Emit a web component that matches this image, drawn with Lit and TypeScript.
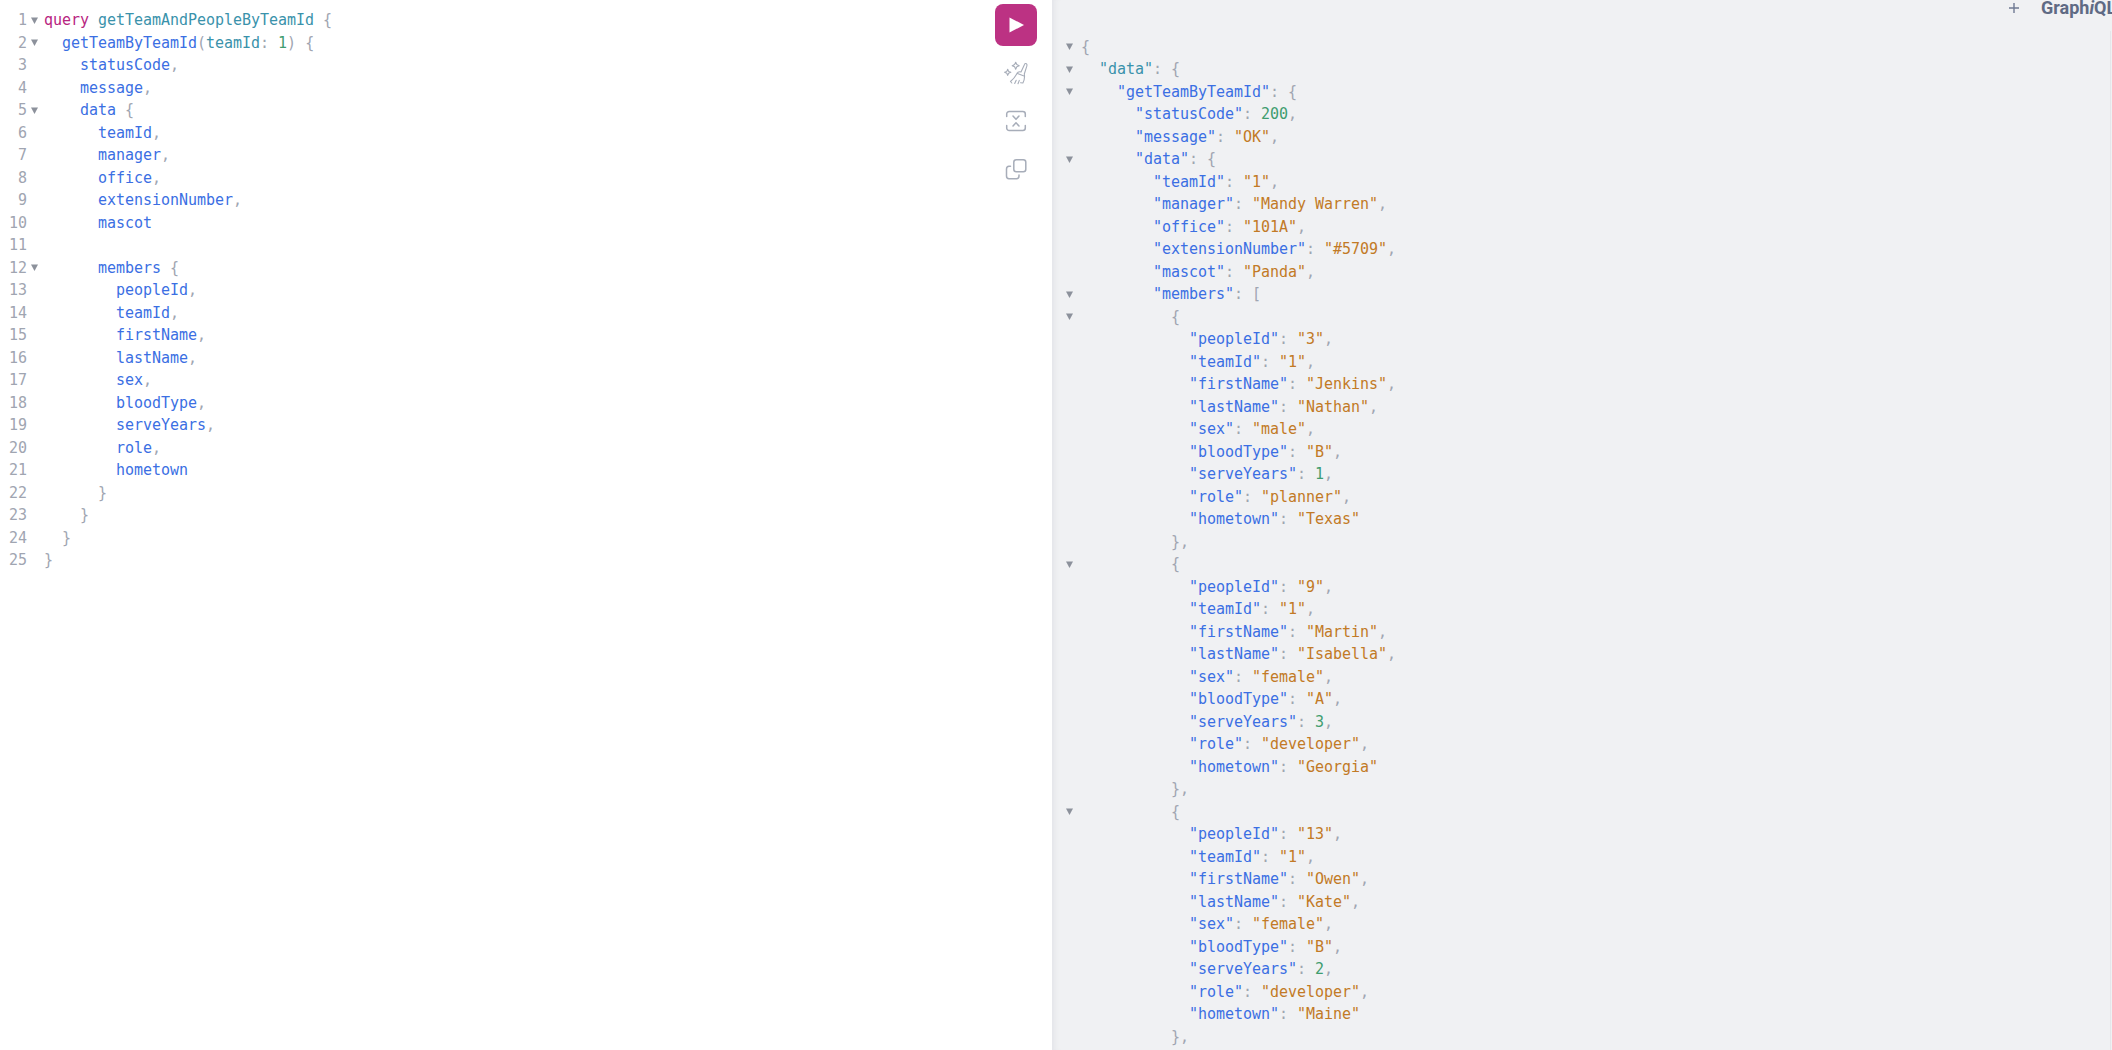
import { LitElement, html, css, svg } from "lit";
import { customElement } from "lit/decorators.js";

const QUERY = `query getTeamAndPeopleByTeamId {
  getTeamByTeamId(teamId: 1) {
    statusCode,
    message,
    data {
      teamId,
      manager,
      office,
      extensionNumber,
      mascot

      members {
        peopleId,
        teamId,
        firstName,
        lastName,
        sex,
        bloodType,
        serveYears,
        role,
        hometown
      }
    }
  }
}`;

const person = (id: string, first: string, last: string, sex: string, blood: string, years: number, role: string, town: string) => `          {
            "peopleId": "${id}",
            "teamId": "1",
            "firstName": "${first}",
            "lastName": "${last}",
            "sex": "${sex}",
            "bloodType": "${blood}",
            "serveYears": ${years},
            "role": "${role}",
            "hometown": "${town}"
          },`;

const RESULT = `{
  "data": {
    "getTeamByTeamId": {
      "statusCode": 200,
      "message": "OK",
      "data": {
        "teamId": "1",
        "manager": "Mandy Warren",
        "office": "101A",
        "extensionNumber": "#5709",
        "mascot": "Panda",
        "members": [
${person("3", "Jenkins", "Nathan", "male", "B", 1, "planner", "Texas")}
${person("9", "Martin", "Isabella", "female", "A", 3, "developer", "Georgia")}
${person("13", "Owen", "Kate", "female", "B", 2, "developer", "Maine")}`;

type Tok = [string, string];

function queryTokens(line: string, i: number): Tok[] {
  if (i === 0) {
    return [["kw", "query"], ["", " "], ["def", "getTeamAndPeopleByTeamId"], ["", " "], ["p", "{"]];
  }
  const out: Tok[] = [];
  const re = /(\s+)|([A-Za-z]+)|(\d+)|(.)/g;
  let m: RegExpExecArray | null;
  let inArgs = false;
  while ((m = re.exec(line))) {
    if (m[1]) out.push(["", m[1]]);
    else if (m[2]) out.push([inArgs ? "def" : "prop", m[2]]);
    else if (m[3]) out.push(["num", m[3]]);
    else {
      if (m[4] === "(") inArgs = true;
      if (m[4] === ")") inArgs = false;
      out.push(["p", m[4]]);
    }
  }
  return out;
}

function jsonTokens(line: string, i: number): Tok[] {
  const out: Tok[] = [];
  const re = /(\s+)|("[^"]*")(:?)|(\d+)|(.)/g;
  let m: RegExpExecArray | null;
  while ((m = re.exec(line))) {
    if (m[1]) out.push(["", m[1]]);
    else if (m[2]) {
      if (m[3]) {
        out.push([i === 1 ? "def" : "prop", m[2]]);
        out.push(["p", ":"]);
      } else out.push(["str", m[2]]);
    } else if (m[4]) out.push(["num", m[4]]);
    else out.push(["p", m[5]]);
  }
  return out;
}

const opens = (l: string) => /[{\[]\s*$/.test(l);

@customElement("app-root")
export class AppRoot extends LitElement {
  static styles = css`
    :host {
      display: flex;
      width: 100%;
      height: 1050px;
      overflow: hidden;
      background: #fff;
      font-family: "DejaVu Sans Mono", "Liberation Mono", monospace;
    }
    .editor-pane {
      flex: 0 0 1052px;
      display: flex;
      min-width: 0;
    }
    .editor {
      flex: 1;
      min-width: 0;
      padding-top: 9px;
    }
    .row {
      display: flex;
      height: 22.5px;
      line-height: 22.5px;
      font-size: 15px;
      letter-spacing: -0.03px;
      white-space: pre;
    }
    .num {
      flex: 0 0 27px;
      text-align: right;
      color: #a0a5b1;
    }
    .fold {
      flex: 0 0 17px;
      display: flex;
      align-items: center;
      padding-left: 4px;
      box-sizing: border-box;
    }
    .fold svg {
      width: 7px;
      height: 7px;
      fill: #8c919b;
    }
    .kw { color: #b8257f; }
    .def { color: #3a92ab; }
    .prop { color: #3b6fe3; }
    .num-tok { color: #3f9d6f; }
    .str { color: #c27a26; }
    .p { color: #a0a5b1; }
    .toolbar {
      flex: 0 0 42px;
      margin-right: 15px;
      padding-top: 4px;
      display: flex;
      flex-direction: column;
      align-items: center;
    }
    .run {
      width: 42px;
      height: 42px;
      border-radius: 8px;
      background: #bc3283;
      display: flex;
      align-items: center;
      justify-content: center;
    }
    .run svg {
      width: 15px;
      height: 16px;
      fill: #fff;
      margin-left: 1px;
    }
    .tool {
      width: 24px;
      height: 24px;
      margin-top: 24px;
      color: #a7adb9;
    }
    .tool svg {
      display: block;
      width: 24px;
      height: 24px;
      fill: none;
      stroke: currentColor;
      stroke-width: 1.5;
      stroke-linecap: round;
      stroke-linejoin: round;
    }
    .tool.broom { margin-top: 15px; }
    .tool.broom svg { stroke-width: 1.1; }
    .result-pane {
      position: relative;
      flex: 1;
      min-width: 0;
      overflow: hidden;
      display: flex;
      flex-direction: column;
      background: #f0f1f3;
      box-shadow: inset 7px 0 6px -5px rgba(60, 70, 100, 0.08);
    }
    .edge {
      position: absolute;
      top: 31px;
      right: 1px;
      bottom: 0;
      width: 1px;
      background: #e5e6ea;
    }
    .header {
      flex: 0 0 16px;
      display: flex;
      align-items: center;
      gap: 21px;
      padding-left: 956px;
      white-space: nowrap;
    }
    .plus {
      flex: none;
      width: 12px;
      height: 12px;
      stroke: #6f7a93;
      stroke-width: 1.4;
    }
    .logo {
      flex: none;
      color: #5f6a84;
      font-family: Roboto, "Liberation Sans", sans-serif;
      font-size: 18px;
      font-weight: 700;
      line-height: 14px;
    }
    .logo em { font-style: italic; font-weight: 700; }
    .result {
      padding-top: 19.5px;
      padding-left: 14px;
    }
    .result .fold { flex: 0 0 15px; padding-left: 0; }
  `;

  private foldIcon() {
    return svg`<svg viewBox="0 0 6 6"><path d="M0 .5h6L3 6z"/></svg>`;
  }

  private tokens(toks: Tok[]) {
    return toks.map(([c, t]) => (c ? html`<span class=${c === "num" ? "num-tok" : c}>${t}</span>` : t));
  }

  render() {
    const q = QUERY.split("\n");
    const r = RESULT.split("\n");
    return html`
      <div class="editor-pane">
        <div class="editor">
          ${q.map(
            (l, i) => html`<div class="row">
              <span class="num">${i + 1}</span>
              <span class="fold">${opens(l) ? this.foldIcon() : ""}</span>
              <span>${this.tokens(queryTokens(l, i))}</span>
            </div>`
          )}
        </div>
        <div class="toolbar">
          <div class="run">
            <svg viewBox="0 0 15 16"><path d="M0.5 0.5 15 8 .5 15.5z" /></svg>
          </div>
          <div class="tool broom">
            <svg viewBox="0 0 24 24">
              <path d="M11.700 1.200l1.100 2.400 2.400 1.100-2.400 1.100-1.100 2.400-1.100-2.400-2.400-1.100 2.400-1.100z" />
              <path d="M3.700 8.200l.9 2.200 2.200.9-2.200.9-.9 2.200-.9-2.200-2.200-.9 2.200-.9z" />
              <path d="M22.800 3.200c-.5-1-1.900-.8-2.300.2L17 11c-1.900-.7-3.400.2-4.300 1.900-1.500 2.900-3.600 5.300-6.200 7.600l1.300 1.500M22.800 3.200c.3.600.2 1.300 0 2L20.300 13c.6 3 .1 6-1.400 9l-2.400-.3" />
              <path d="M10.700 22.500l1.500-3.200M14 22.800l1.300-3.400" />
              <path d="M13.500 12.500l6.500 2.500" />
            </svg>
          </div>
          <div class="tool merge">
            <svg viewBox="0 0 24 24">
              <path d="M2.700 7.500V5A2.500 2.500 0 0 1 5.200 2.500h13.600A2.500 2.500 0 0 1 21.300 5v2.500" />
              <path d="M2.700 16.500V19a2.500 2.500 0 0 0 2.500 2.500h13.600a2.500 2.500 0 0 0 2.500-2.500v-2.500" />
              <path d="M9 7l3 3.200L15 7M9 17l3-3.200 3 3.200" />
            </svg>
          </div>
          <div class="tool copy">
            <svg viewBox="0 0 24 24">
              <rect x="9.800" y="2.800" width="12" height="12" rx="2.500" />
              <path d="M6.500 9.300H5A2.800 2.800 0 0 0 2.500 12v7A2.800 2.800 0 0 0 5 21.800h7.500a2.800 2.800 0 0 0 2.500-2.800v-1" />
            </svg>
          </div>
        </div>
      </div>
      <div class="result-pane">
        <div class="header">
          <svg class="plus" viewBox="0 0 12 12"><path d="M6 1v10M1 6h10" /></svg>
          <span class="logo">Graph<em>i</em>QL</span>
        </div>
        <div class="result">
          ${r.map(
            (l, i) => html`<div class="row">
              <span class="fold">${opens(l) ? this.foldIcon() : ""}</span>
              <span>${this.tokens(jsonTokens(l, i))}</span>
            </div>`
          )}
        </div>
        <div class="edge"></div>
      </div>
    `;
  }
}
